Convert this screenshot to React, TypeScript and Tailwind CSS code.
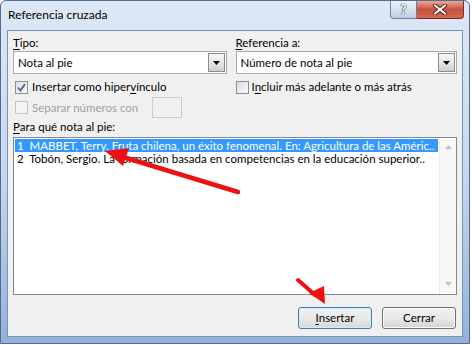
import React from 'react';

function CheckBox({ checked = false, disabled = false }: { checked?: boolean; disabled?: boolean }) {
  return (
    <span
      className={
        disabled
          ? 'w-[13px] h-[13px] shrink-0 border border-[#c4c4c4] bg-[#f4f4f4] flex items-center justify-center'
          : 'w-[13px] h-[13px] shrink-0 border border-[#8e8f8f] bg-gradient-to-br from-[#dcdcdc] to-[#fbfbfb] flex items-center justify-center'
      }
    >
      {checked ? (
        <svg width="9" height="9" viewBox="0 0 9 9">
          <path d="M1 4.5 L3.5 7.5 L8 1" fill="none" stroke="#4a5f97" strokeWidth="1.8" />
        </svg>
      ) : null}
    </span>
  );
}

function Combo({ value }: { value: string }) {
  return (
    <div className="h-[23px] bg-white border border-[#a5a9b0] flex items-center">
      <span className="flex-1 pl-[4px] whitespace-nowrap">{value}</span>
      <div className="w-[17px] h-[19px] mr-[1px] border border-[#8c8c8c] bg-gradient-to-b from-[#f6f6f6] via-[#e6e6e6] to-[#cfcfcf] flex items-center justify-center">
        <svg width="7" height="4" viewBox="0 0 7 4">
          <path d="M0 0 H7 L3.5 4 Z" fill="#000" />
        </svg>
      </div>
    </div>
  );
}

function Arrows() {
  return (
    <svg className="absolute inset-0 pointer-events-none" width="470" height="344" viewBox="0 0 470 344">
      {/* big arrow pointing at the first footnote */}
      <line x1="237" y1="191" x2="122" y2="156" stroke="#ee1111" strokeWidth="4.5" strokeLinecap="round" />
      <polygon points="104,150 128,147 122,165" fill="#ee1111" />
      {/* small arrow pointing at Insertar */}
      <line x1="297" y1="279" x2="314" y2="294" stroke="#ee1111" strokeWidth="4" strokeLinecap="round" />
      <polygon points="324,303 308,292 323,285" fill="#ee1111" />
    </svg>
  );
}

export default function App() {
  return (
    <div className="w-[472px] h-[345px] bg-white font-['Lato',sans-serif] text-black">
      <div className="relative w-[470px] h-[344px] rounded-t-[6px] border border-[#4f6c93] bg-gradient-to-b from-[#dde8f5] via-[#c7d8ee] to-[#94b1d8] flex flex-col">
        {/* Title bar */}
        <div className="h-[29px] flex items-start">
          <div className="pl-[7px] pt-[7px] text-[12px] leading-[14px] text-black">Referencia cruzada</div>
          <div className="ml-auto mr-[5px] flex">
            <div className="w-[27px] h-[18px] rounded-bl-[4px] border border-t-0 border-[#6c83a6] bg-gradient-to-b from-[#eef3fa] via-[#d8e3f1] to-[#bccde4] flex items-center justify-center">
              <span className="text-[13px] leading-[13px] font-bold text-white [text-shadow:0_0_1px_#2f3e52,0_0_1px_#2f3e52,0_0_1px_#2f3e52]">?</span>
            </div>
            <div className="w-[47px] h-[18px] rounded-br-[4px] border border-t-0 border-l-0 border-[#7d2a22] bg-gradient-to-b from-[#e9a799] via-[#c84e3d] to-[#d56a53] flex items-center justify-center">
              <svg width="14" height="11" viewBox="0 0 14 11">
                <path d="M2 1.5 L12 9.5 M12 1.5 L2 9.5" stroke="#4a1d18" strokeWidth="4" strokeLinecap="round" />
                <path d="M2 1.5 L12 9.5 M12 1.5 L2 9.5" stroke="#ffffff" strokeWidth="2.2" strokeLinecap="round" />
              </svg>
            </div>
          </div>
        </div>

        {/* Client area */}
        <div className="mx-[6px] mb-[6px] flex-1 bg-[#f0f0f0] border border-[#7893b9] px-[5px] pt-[5px] flex flex-col text-[11.5px] leading-[14px]">
          <div className="flex gap-[9px]">
            {/* left column */}
            <div className="w-[214px] flex flex-col">
              <div className="h-[14px]">
                <span className="underline underline-offset-[2px]">T</span>ipo:
              </div>
              <div className="mt-[1px]">
                <Combo value="Nota al pie" />
              </div>
              <div className="mt-[5px] h-[16px] flex items-center pl-[2px]">
                <CheckBox checked />
                <span className="ml-[4px] whitespace-nowrap">
                  Insertar como hiper<span className="underline underline-offset-[2px]">v</span>ínculo
                </span>
              </div>
              <div className="mt-[2px] h-[21px] flex items-center pl-[2px]">
                <CheckBox disabled />
                <span className="ml-[4px] w-[120px] whitespace-nowrap text-[#a0a0a0]">Separar números con</span>
                <div className="w-[30px] h-[21px] border border-[#cbcbcb] bg-[#f0f0f0]" />
              </div>
            </div>
            {/* right column */}
            <div className="w-[222px] flex flex-col">
              <div className="h-[14px]">
                <span className="underline underline-offset-[2px]">R</span>eferencia a:
              </div>
              <div className="mt-[1px]">
                <Combo value="Número de nota al pie" />
              </div>
              <div className="mt-[5px] h-[16px] flex items-center">
                <CheckBox />
                <span className="ml-[3px] whitespace-nowrap">
                  I<span className="underline underline-offset-[2px]">n</span>cluir más adelante o más atrás
                </span>
              </div>
            </div>
          </div>

          <div className="mt-[2px] h-[14px]">
            <span className="underline underline-offset-[2px]">P</span>ara qué nota al pie:
          </div>

          {/* list box */}
          <div className="mt-[3px] h-[158px] bg-white border border-[#828790] flex">
            <div className="flex-1 min-w-0 pt-[1px] pl-[1px] pr-[1px] flex flex-col">
              <div className="h-[13px] leading-[13px] bg-[#3399ff] text-white pl-[2px] whitespace-pre overflow-hidden">
                1  MABBET, Terry. Fruta chilena, un éxito fenomenal. En: Agricultura de las Améric..
              </div>
              <div className="h-[13px] leading-[13px] pl-[2px] whitespace-pre overflow-hidden">
                2  Tobón, Sergio. La formación basada en competencias en la educación superior..
              </div>
            </div>
            <div className="w-[17px] bg-[#f8f8f8] border-l border-[#ececec] flex flex-col items-center justify-between pt-[7px] pb-[8px]">
              <svg width="7" height="4" viewBox="0 0 7 4">
                <path d="M0 4 H7 L3.5 0 Z" fill="#c2c2c2" />
              </svg>
              <svg width="7" height="4" viewBox="0 0 7 4">
                <path d="M0 0 H7 L3.5 4 Z" fill="#c2c2c2" />
              </svg>
            </div>
          </div>

          {/* buttons */}
          <div className="mt-[12px] flex justify-end gap-[10px] pr-[1px]">
            <button className="w-[74px] h-[22px] rounded-[3px] border border-[#3c7fb1] bg-gradient-to-b from-[#f2f2f2] via-[#e9e9e9] to-[#d7d7d7] shadow-[inset_0_0_0_1px_#d4ecf8]">
              <span className="underline underline-offset-[2px]">I</span>nsertar
            </button>
            <button className="w-[74px] h-[22px] rounded-[3px] border border-[#707070] bg-gradient-to-b from-[#f2f2f2] via-[#e9e9e9] to-[#d4d4d4] shadow-[inset_0_0_0_1px_#fbfbfb]">
              Cerrar
            </button>
          </div>
        </div>

        <Arrows />
      </div>
    </div>
  );
}
